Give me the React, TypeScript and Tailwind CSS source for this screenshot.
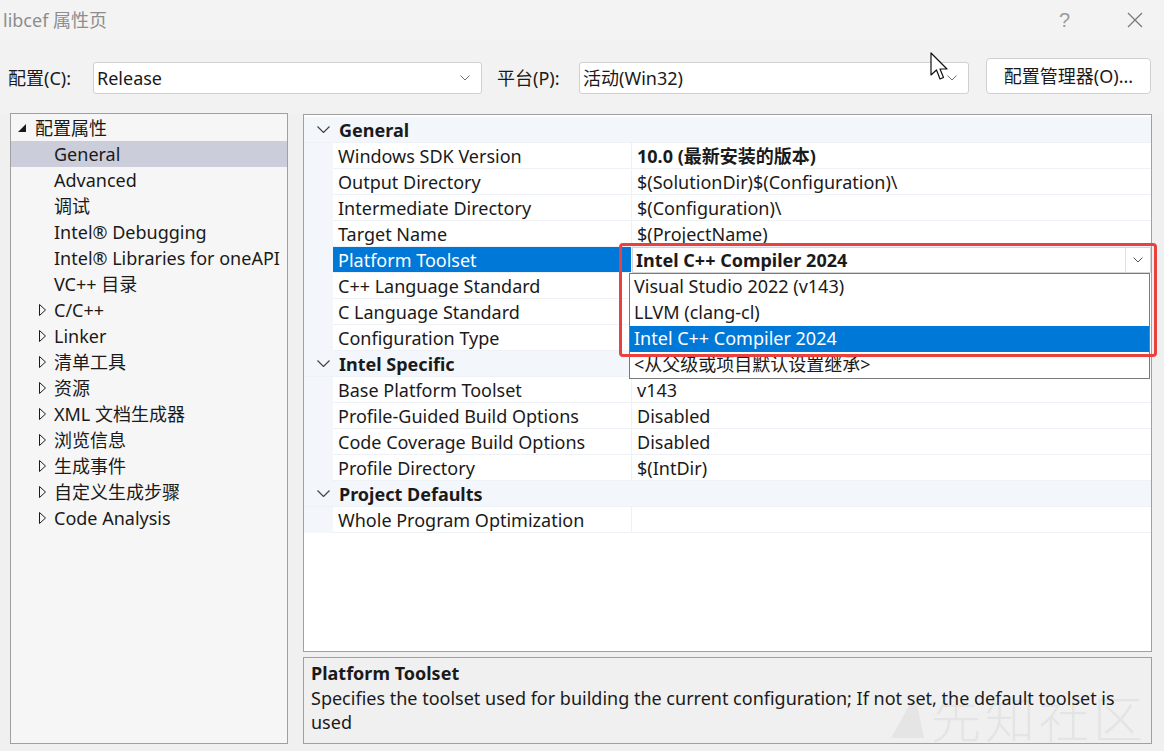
import React from 'react';

type TreeItem = { label: string; level: 0 | 1; expanded?: boolean; collapsed?: boolean; selected?: boolean };

const tree: TreeItem[] = [
  { label: '配置属性', level: 0, expanded: true },
  { label: 'General', level: 1, selected: true },
  { label: 'Advanced', level: 1 },
  { label: '调试', level: 1 },
  { label: 'Intel® Debugging', level: 1 },
  { label: 'Intel® Libraries for oneAPI', level: 1 },
  { label: 'VC++ 目录', level: 1 },
  { label: 'C/C++', level: 1, collapsed: true },
  { label: 'Linker', level: 1, collapsed: true },
  { label: '清单工具', level: 1, collapsed: true },
  { label: '资源', level: 1, collapsed: true },
  { label: 'XML 文档生成器', level: 1, collapsed: true },
  { label: '浏览信息', level: 1, collapsed: true },
  { label: '生成事件', level: 1, collapsed: true },
  { label: '自定义生成步骤', level: 1, collapsed: true },
  { label: 'Code Analysis', level: 1, collapsed: true },
];

type Prop = { name: string; value?: string; bold?: boolean; combo?: boolean };
type Section = { title: string; rows: Prop[] };

const sections: Section[] = [
  {
    title: 'General',
    rows: [
      { name: 'Windows SDK Version', value: '10.0 (最新安装的版本)', bold: true },
      { name: 'Output Directory', value: '$(SolutionDir)$(Configuration)\\' },
      { name: 'Intermediate Directory', value: '$(Configuration)\\' },
      { name: 'Target Name', value: '$(ProjectName)' },
      { name: 'Platform Toolset', combo: true },
      { name: 'C++ Language Standard' },
      { name: 'C Language Standard' },
      { name: 'Configuration Type' },
    ],
  },
  {
    title: 'Intel Specific',
    rows: [
      { name: 'Base Platform Toolset', value: 'v143' },
      { name: 'Profile-Guided Build Options', value: 'Disabled' },
      { name: 'Code Coverage Build Options', value: 'Disabled' },
      { name: 'Profile Directory', value: '$(IntDir)' },
    ],
  },
  {
    title: 'Project Defaults',
    rows: [{ name: 'Whole Program Optimization' }],
  },
];

const options = ['Visual Studio 2022 (v143)', 'LLVM (clang-cl)', 'Intel C++ Compiler 2024', '<从父级或项目默认设置继承>'];

function Chevron({ className = '' }: { className?: string }) {
  return (
    <svg width="10" height="6" viewBox="0 0 10 6" className={className}>
      <polyline points="0.5,0.5 5,5 9.5,0.5" fill="none" stroke="currentColor" strokeWidth="1" />
    </svg>
  );
}

function Combo({ text, width }: { text: string; width: string }) {
  return (
    <div className={`${width} h-[32px] bg-white border border-[#d0d0d0] rounded-[3px] flex items-center pl-[3px] pr-[11px] mt-[4px]`}>
      <span className="flex-1 text-[18px] text-[#1a1a1a]">{text}</span>
      <Chevron className="text-[#6e6e6e]" />
    </div>
  );
}

export default function App() {
  return (
    <div className="relative w-[1164px] h-[751px] overflow-hidden bg-[#f0f0f0] text-[#1a1a1a] font-['Noto_Sans','Noto_Sans_CJK_SC',sans-serif]">
      {/* Title bar */}
      <div className="h-[40px] bg-[#f3f3f3] flex items-center">
        <span className="pl-[3px] text-[18px] text-[#8d8d8d]">libcef 属性页</span>
        <div className="flex-1" />
        <span className="text-[20px] text-[#9a9a9a] mr-[57px] font-['Liberation_Sans',sans-serif]">?</span>
        <svg width="16" height="16" viewBox="0 0 16 16" className="mr-[21px] text-[#7a7a7a]">
          <path d="M1 1 L15 15 M15 1 L1 15" stroke="currentColor" strokeWidth="1.3" />
        </svg>
      </div>

      {/* Config row */}
      <div className="h-[73px] bg-[#f2f2f2] flex items-start pt-[18px]">
        <div className="w-[93px] pl-[8px] mt-[4px] h-[32px] flex items-center text-[18px]">配置(C):</div>
        <Combo text="Release" width="w-[389px]" />
        <div className="w-[97px] pl-[15px] mt-[4px] h-[32px] flex items-center text-[18px]">平台(P):</div>
        <Combo text="活动(Win32)" width="w-[390px]" />
        <button className="ml-[17px] w-[165px] h-[36px] bg-white border border-[#d0d0d0] rounded-[4px] text-[18px] text-[#1a1a1a]">
          配置管理器(O)...
        </button>
      </div>

      {/* Main area */}
      <div className="flex pl-[10px] pr-[12px] h-[631px]">
        {/* Tree */}
        <div className="w-[278px] h-full border border-[#a0a0a0] bg-[#f6f6f6] pt-[1px] overflow-hidden">
          {tree.map((item) => (
            <div
              key={item.label}
              className={`h-[26px] flex items-center whitespace-nowrap text-[18px] leading-[26px] ${item.selected ? 'bg-[#cbcdda]' : ''}`}
            >
              {item.level === 0 ? (
                <>
                  <svg width="8" height="8" viewBox="0 0 8 8" className="ml-[7px] mr-[9px]">
                    <polygon points="8,0 8,8 0,8" fill="#1a1a1a" />
                  </svg>
                  <span>{item.label}</span>
                </>
              ) : (
                <>
                  <span className="w-[43px] flex justify-end pr-[8px]">
                    {item.collapsed && (
                      <svg width="7" height="12" viewBox="0 0 7 12">
                        <polygon points="0.5,0.5 6.5,6 0.5,11.5" fill="none" stroke="#1a1a1a" strokeWidth="1" />
                      </svg>
                    )}
                  </span>
                  <span>{item.label}</span>
                </>
              )}
            </div>
          ))}
        </div>

        {/* Right column */}
        <div className="ml-[15px] flex-1 flex flex-col">
          <div className="relative h-[539px] mt-[1px] border border-[#a0a0a0] bg-white pt-[2px]">
            {sections.map((s) => (
              <div key={s.title}>
                <div className="h-[26px] bg-[#f3f6fa] flex items-center border-b border-[#eef1f6]">
                  <span className="w-[35px] flex justify-center pl-[4px]">
                    <svg width="13" height="7" viewBox="0 0 13 7" className="text-[#444]">
                      <polyline points="0.5,0.5 6.5,6.5 12.5,0.5" fill="none" stroke="currentColor" strokeWidth="1.2" />
                    </svg>
                  </span>
                  <span className="font-bold text-[18px] leading-[26px]">{s.title}</span>
                </div>
                {s.rows.map((r) => (
                  <div key={r.name} className="h-[26px] flex">
                    <div className="w-[29px] bg-[#f3f6fa]" />
                    <div
                      className={`w-[299px] pl-[5px] text-[18px] leading-[26px] whitespace-nowrap border-b border-r border-[#eef1f6] ${
                        r.combo ? 'bg-[#0078d7] text-white' : ''
                      }`}
                    >
                      {r.name}
                    </div>
                    {r.combo ? (
                      <div className="flex-1 flex bg-white border border-[#d4d4d4]">
                        <span className="flex-1 pl-[3px] font-bold text-[18px] leading-[24px]">Intel C++ Compiler 2024</span>
                        <span className="w-[25px] border-l border-[#e0e0e0] flex items-center justify-center">
                          <Chevron className="text-[#555]" />
                        </span>
                      </div>
                    ) : (
                      <div className={`flex-1 pl-[5px] text-[18px] leading-[26px] whitespace-nowrap border-b border-[#eef1f6] ${r.bold ? 'font-bold' : ''}`}>
                        {r.value}
                      </div>
                    )}
                  </div>
                ))}
              </div>
            ))}

            {/* Dropdown list */}
            <div className="absolute left-[325px] top-[158px] w-[521px] bg-white border border-[#7a7a7a]">
              {options.map((o, i) => (
                <div
                  key={o}
                  className={`h-[26px] pl-[4px] text-[18px] leading-[25px] whitespace-nowrap ${i === 2 ? 'bg-[#0078d7] text-white' : ''}`}
                >
                  {o}
                </div>
              ))}
            </div>
          </div>

          {/* Description */}
          <div className="relative mt-[5px] h-[87px] border border-[#a0a0a0] bg-[#f0f0f0] pl-[7px] pr-[14px] pt-[2px] overflow-hidden">
            {/* Watermark */}
            <div className="absolute right-[4px] top-[30px] flex items-center gap-[6px] pointer-events-none">
              <svg width="36" height="46" viewBox="0 0 36 46">
                <polygon points="26,2 35,45 2,45" fill="#e5e5e5" />
              </svg>
              <span className="text-[50px] leading-[56px] tracking-[4px] text-[#e4e4e4] font-['Noto_Sans_CJK_SC',sans-serif] font-light">先知社区</span>
            </div>
            <div className="relative font-bold text-[18px] leading-[26px]">Platform Toolset</div>
            <div className="relative text-[18px] leading-[24px]">
              Specifies the toolset used for building the current configuration; If not set, the default toolset is used
            </div>
          </div>
        </div>
      </div>

      {/* Red highlight box */}
      <div className="absolute left-[619px] top-[243px] w-[538px] h-[114px] border-[3px] border-[#e8413f] rounded-[4px] pointer-events-none" />

      {/* Mouse cursor */}
      <svg width="20" height="30" viewBox="0 0 20 30" className="absolute left-[930px] top-[52px] pointer-events-none">
        <path d="M1 1 L1 23 L6.5 18 L10 27 L13.5 25.5 L10 17 L17 17 Z" fill="white" stroke="#111" strokeWidth="1.2" strokeLinejoin="round" />
      </svg>
    </div>
  );
}
